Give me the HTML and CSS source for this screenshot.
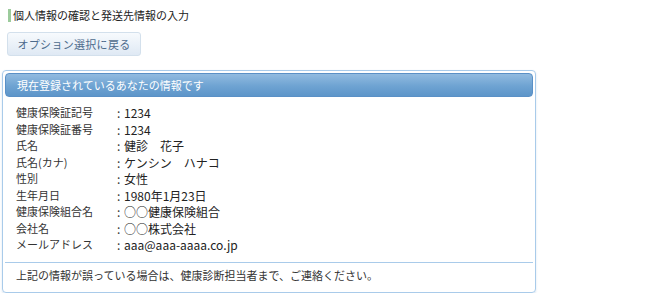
FILE: index.html
```html
<!DOCTYPE html>
<html lang="ja">
<head>
  <meta charset="UTF-8" />
  <title>個人情報の確認と発送先情報の入力</title>
  <link rel="stylesheet" href="styles.css">
</head>
<body>
  <h1 class="page-title">個人情報の確認と発送先情報の入力</h1>

  <button type="button" class="back-button">オプション選択に戻る</button>

  <div class="panel">
    <div class="panel-head">現在登録されているあなたの情報です</div>
    <dl class="info">
      <dt>健康保険証記号</dt><dd>1234</dd>
      <dt>健康保険証番号</dt><dd>1234</dd>
      <dt>氏名</dt><dd>健診　花子</dd>
      <dt>氏名(カナ)</dt><dd>ケンシン　ハナコ</dd>
      <dt>性別</dt><dd>女性</dd>
      <dt>生年月日</dt><dd>1980年1月23日</dd>
      <dt>健康保険組合名</dt><dd>○○健康保険組合</dd>
      <dt>会社名</dt><dd>○○株式会社</dd>
      <dt>メールアドレス</dt><dd>aaa@aaa-aaaa.co.jp</dd>
    </dl>
    <p class="panel-note">上記の情報が誤っている場合は、健康診断担当者まで、ご連絡ください。</p>
  </div>
</body>
</html>
```

FILE: styles.css
```css
body {
  font-family: "Noto Sans CJK JP", "Noto Sans", sans-serif;
  background-color: #fff;
  margin: 0;
  color: #333;
  font-size: 11px;
}
.page-title {
  margin: 9px 0 0 8px;
  padding-left: 2px;
  border-left: 3px solid #9ccb9c;
  font-size: 11px;
  font-weight: normal;
  line-height: 13px;
  color: #222;
}
.back-button {
  display: block;
  margin: 10px 0 0 7px;
  width: 134px;
  height: 24px;
  padding: 0;
  font-family: inherit;
  font-size: 11px;
  letter-spacing: 0.3px;
  color: #4d6b8c;
  background: linear-gradient(#f7fafd, #dfe9f4);
  border: 1px solid #d3e0ec;
  border-radius: 3px;
}
.panel {
  margin: 14px 0 0 2px;
  width: 528px;
  padding: 2px;
  border: 1px solid #a9cbea;
  border-radius: 4px;
  box-shadow: 0 1px 2px rgba(120, 160, 200, 0.3);
}
.panel-head {
  height: 22px;
  line-height: 22px;
  padding-left: 11px;
  color: #fff;
  font-size: 11px;
  background: linear-gradient(#92bbe0, #6ea3d2 55%, #5d95c9);
  border: 1px solid #5a90c6;
  border-radius: 4px;
}
.info {
  display: grid;
  grid-template-columns: 101px auto;
  grid-auto-rows: 16.5px;
  margin: 8px 0 0 11px;
}
.info dt,
.info dd {
  margin: 0;
  height: 16px;
  line-height: 16px;
  white-space: nowrap;
}
.info dt {
  position: relative;
  top: -1px;
}
.info dd {
  font-size: 12px;
  color: #222;
}
.info dd::before {
  content: ":";
  display: inline-block;
  width: 7px;
  color: #333;
}
.panel-note {
  margin: 8px 0 0;
  padding: 6px 11px 8px;
  border-top: 1px solid #a9cbea;
  line-height: 13px;
}
```
